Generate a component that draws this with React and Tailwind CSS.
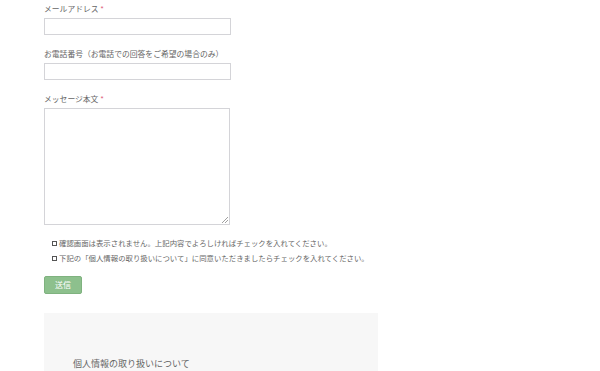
export default function App() {
  const font = { fontFamily: '"Noto Sans CJK JP", "Noto Sans", sans-serif' };
  return (
    <div className="w-[600px] h-[371px] overflow-hidden bg-white" style={font}>
      <div className="pl-[44px] pt-[4px] flex flex-col">
        <label className="text-[7.8px] leading-[10px] text-[#666] h-[10px]">
          メールアドレス <span className="text-[#e0607e]">*</span>
        </label>
        <div className="mt-[4px] w-[187px] h-[17px] border border-[#d4d4d8] bg-white"></div>

        <label className="mt-[14px] text-[7.8px] leading-[10px] text-[#666] h-[10px]">
          お電話番号（お電話での回答をご希望の場合のみ）
        </label>
        <div className="mt-[4px] w-[187px] h-[17px] border border-[#d4d4d8] bg-white"></div>

        <label className="mt-[14px] text-[7.8px] leading-[10px] text-[#666] h-[10px]">
          メッセージ本文 <span className="text-[#e0607e]">*</span>
        </label>
        <div className="mt-[4px] w-[186px] h-[117px] border border-[#d4d4d8] bg-white relative">
          <svg className="absolute right-[1px] bottom-[1px]" width="7" height="7" viewBox="0 0 7 7">
            <line x1="1" y1="7" x2="7" y2="1" stroke="#888" strokeWidth="0.8" />
            <line x1="4" y1="7" x2="7" y2="4" stroke="#888" strokeWidth="0.8" />
          </svg>
        </div>

        <div className="mt-[13px] pl-[8px] flex flex-col gap-[5px] text-[7.4px] leading-[10px] text-[#666]">
          <div className="flex items-center gap-[2px]">
            <span className="inline-block w-[5px] h-[5px] border border-[#555]"></span>
            <span>確認画面は表示されません。上記内容でよろしければチェックを入れてください。</span>
          </div>
          <div className="flex items-center gap-[2px]">
            <span className="inline-block w-[5px] h-[5px] border border-[#555]"></span>
            <span>下記の「個人情報の取り扱いについて」に同意いただきましたらチェックを入れてください。</span>
          </div>
        </div>

        <div className="mt-[13px] w-[38px] h-[18px] rounded-[2px] bg-[#8dc08d] border border-[#7fb27f] flex items-center justify-center text-white text-[8px]">
          送信
        </div>

        <div className="mt-[19px] w-[334px] h-[80px] bg-[#f7f7f7] pl-[29px] pt-[45px]">
          <div className="text-[9px] leading-[12px] text-[#666]">個人情報の取り扱いについて</div>
        </div>
      </div>
    </div>
  );
}
